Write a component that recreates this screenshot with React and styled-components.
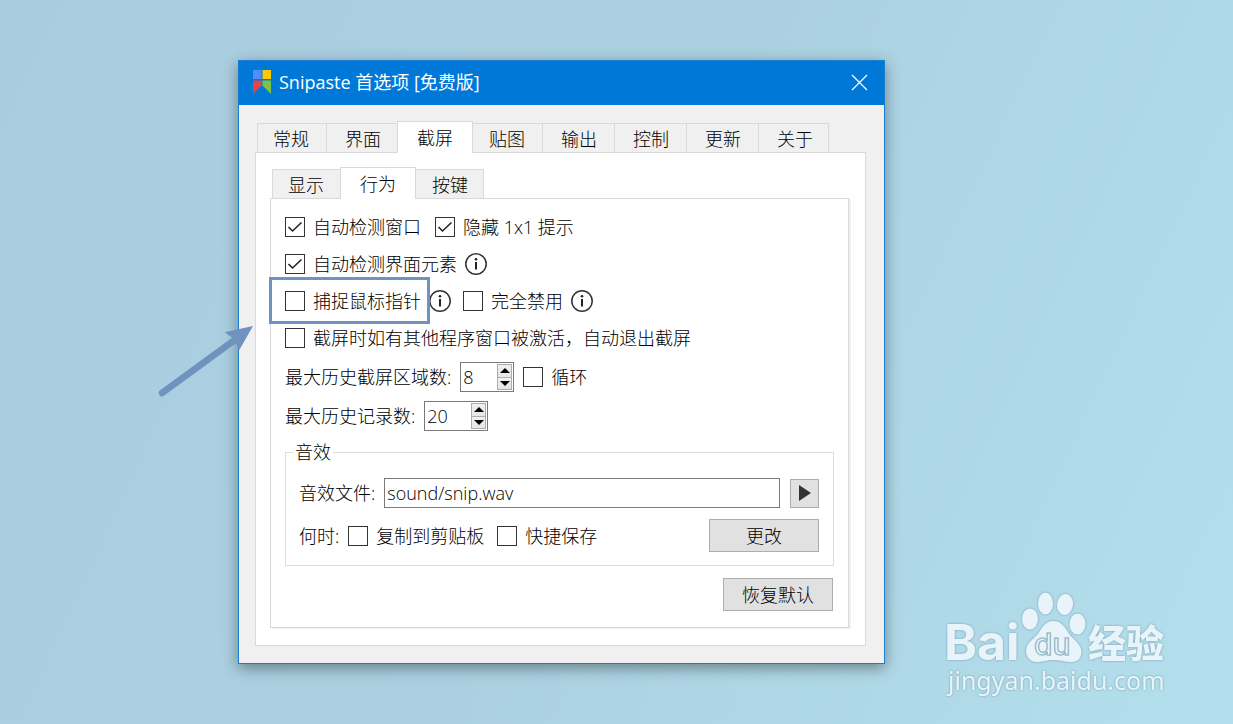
import React, { useState } from "react";
import styled, { createGlobalStyle, css } from "styled-components";

const Global = createGlobalStyle`
  *, *::before, *::after { box-sizing: border-box; }
  body { margin: 0; }
  body, button, input {
    font-family: "Open Sans", "Noto Sans CJK SC", sans-serif;
    font-size: 18px;
    font-weight: 300;
    line-height: 20px;
    color: #000;
  }
`;

const Desktop = styled.main`
  position: relative;
  min-height: 100vh;
  padding: 60px 348px 60px 238px;
  overflow: hidden;
  background: linear-gradient(115deg, #a8cddf 0%, #abd1e1 50%, #b3dfec 100%);
`;

const Dialog = styled.section`
  min-width: 640px;
  border: 1px solid #1a7fd4;
  background: #f0f0f0;
  box-shadow: 0 4px 14px rgba(0, 0, 0, 0.4);
`;

const TitleBar = styled.header`
  display: flex;
  align-items: center;
  height: 44px;
  padding: 0 16px 2px 14px;
  background: #0078d7;
  color: #fff;
`;

const Title = styled.h1`
  flex: 1;
  margin: 0 0 0 8px;
  font-size: 18px;
  font-weight: 400;
  line-height: 24px;
`;

const CloseButton = styled.button`
  display: flex;
  padding: 0;
  border: 0;
  background: none;
`;

const DialogBody = styled.div`
  padding: 16px 18px 17px 16px;
`;

const TabList = styled.div`
  display: flex;
  align-items: flex-end;
  height: 31px;
`;

const Tab = styled.button`
  width: 72px;
  height: 29px;
  padding: 2px 0 0 18px;
  border: 1px solid #d9d9d9;
  border-width: 1px 1px 0 0;
  background: #f0f0f0;
  text-align: left;
  white-space: nowrap;

  &:first-child {
    width: 70px;
    margin-left: 2px;
    padding-left: 15px;
    border-left-width: 1px;
  }
  &:last-child {
    width: 70px;
  }

  ${(p) =>
    p.$active &&
    css`
      position: relative;
      z-index: 1;
      width: 76px;
      height: 32px;
      margin: 0 -2px -1px;
      padding: 0 0 0 19px;
      border-width: 1px 1px 0;
      background: #fff;
    `}
`;

const OuterPanel = styled.div`
  padding: 14px 16px 17px 14px;
  border: 1px solid #d9d9d9;
  background: #fff;
`;

const InnerPanel = styled.form`
  display: flex;
  flex-direction: column;
  padding: 18px 14px 16px;
  border: 1px solid #d9d9d9;
  background: #fff;
  box-shadow: 2px 1px 0 #f0f0f0;
`;

const CheckGroup = styled.div`
  display: flex;
  flex-direction: column;
  gap: 17px;
  margin-bottom: 14px;
`;

const CheckRow = styled.div`
  display: flex;
  align-items: center;
  gap: ${(p) => p.$gap || 8}px;
  height: 20px;
  white-space: nowrap;
`;

const CheckLabel = styled.label`
  position: relative;
  display: flex;
  align-items: center;
  gap: 8px;
  margin-left: ${(p) => (p.$spaced ? 4 : 0)}px;
  white-space: nowrap;

  ${(p) =>
    p.$marked &&
    css`
      &::after {
        content: "";
        position: absolute;
        inset: -14px -9px -13px -16px;
        border: 3px solid #7092be;
        pointer-events: none;
      }
    `}
`;

const CheckBox = styled.input`
  appearance: none;
  flex: none;
  width: 20px;
  height: 20px;
  margin: 0;
  border: 1px solid #333;
  background: #fff;

  &:checked {
    background: #fff
      url("data:image/svg+xml,%3Csvg xmlns='http://www.w3.org/2000/svg' viewBox='0 0 18 18'%3E%3Cpath d='M2.500 9l4 4L15.500 4.500' fill='none' stroke='%23222' stroke-width='1.600'/%3E%3C/svg%3E");
  }
`;

const SpinRow = styled.div`
  display: flex;
  align-items: center;
  gap: 9px;
  height: 30px;
  margin-bottom: 9px;
  white-space: nowrap;
`;

const SpinBox = styled.div`
  display: flex;
  width: ${(p) => p.$width}px;
  height: 30px;
  padding: 1px;
  border: 1px solid #7a7a7a;
  background: #fff;
`;

const SpinInput = styled.input`
  flex: 1;
  min-width: 0;
  padding: 0 0 0 1px;
  border: 0;
  outline: 0;
  appearance: textfield;

  &::-webkit-inner-spin-button {
    appearance: none;
    margin: 0;
  }
`;

const SpinButtons = styled.div`
  display: flex;
  flex-direction: column;
  width: 15px;
`;

const SpinButton = styled.button`
  display: flex;
  flex: 1;
  align-items: center;
  justify-content: center;
  padding: 0;
  border: 1px solid #acacac;
  background: linear-gradient(#f0f0f0, #e5e5e5);

  & + & {
    border-top: 0;
  }
`;

const SoundGroup = styled.fieldset`
  display: flex;
  flex-direction: column;
  gap: 11px;
  min-width: 0;
  margin: 0 0 12px;
  padding: 14px 14px 13px 13px;
  border: 1px solid #dcdcdc;
`;

const Legend = styled.legend`
  height: 24px;
  margin-left: -6px;
  padding: 0 2px;
  line-height: 24px;
`;

const FieldRow = styled.div`
  display: flex;
  align-items: center;
  gap: 9px;
  white-space: nowrap;
`;

const FileInput = styled.input`
  flex: 1;
  min-width: 0;
  height: 30px;
  padding: 0 2px;
  border: 1px solid #7a7a7a;
  outline: 0;
  background: #fff;
`;

const Button = styled.button`
  width: 110px;
  height: 33px;
  padding: 0;
  border: 1px solid #adadad;
  background: #e1e1e1;
`;

const PlayButton = styled(Button)`
  display: flex;
  align-items: center;
  justify-content: center;
  width: 29px;
  height: 29px;
  margin-left: 1px;
`;

const ChangeButton = styled(Button)`
  margin-left: auto;
`;

const ResetButton = styled(Button)`
  align-self: flex-end;
  margin-right: 1px;
`;

const Pointer = styled.svg`
  position: absolute;
  left: 154px;
  top: 320px;
`;

const Watermark = styled.aside`
  position: absolute;
  right: 61px;
  bottom: 22px;
  filter: drop-shadow(0 0 1px rgba(90, 130, 150, 0.7));

  svg {
    display: block;
  }
`;

function Check({ children, defaultChecked, spaced, marked }) {
  return (
    <CheckLabel $spaced={spaced} $marked={marked}>
      <CheckBox type="checkbox" defaultChecked={defaultChecked} />
      {children}
    </CheckLabel>
  );
}

function InfoIcon() {
  return (
    <svg width="22" height="22" viewBox="0 0 22 22" role="img" aria-label="info">
      <circle cx="11" cy="11" r="10.2" fill="none" stroke="#333" strokeWidth="1.5" />
      <path d="M11 9v7.500" stroke="#222" strokeWidth="2" />
      <circle cx="11" cy="6.300" r="1.300" fill="#222" />
    </svg>
  );
}

function Spin({ id, initial, width }) {
  const [value, setValue] = useState(initial);
  return (
    <SpinBox $width={width}>
      <SpinInput
        id={id}
        type="number"
        value={value}
        onChange={(e) => setValue(Number(e.target.value))}
      />
      <SpinButtons>
        <SpinButton type="button" aria-label="+" onClick={() => setValue(value + 1)}>
          <svg width="10" height="5" viewBox="0 0 10 5">
            <path d="M5 0l5 5H0z" />
          </svg>
        </SpinButton>
        <SpinButton type="button" aria-label="-" onClick={() => setValue(value - 1)}>
          <svg width="10" height="5" viewBox="0 0 10 5">
            <path d="M0 0h10L5 5z" />
          </svg>
        </SpinButton>
      </SpinButtons>
    </SpinBox>
  );
}

function Tabs({ items, active }) {
  return (
    <TabList role="tablist">
      {items.map((name) => (
        <Tab key={name} type="button" role="tab" aria-selected={name === active} $active={name === active}>
          {name}
        </Tab>
      ))}
    </TabList>
  );
}

function Logo() {
  return (
    <svg width="18" height="25" viewBox="0 0 18 25" aria-hidden="true">
      <path d="M0 0h8.500v9H0z" fill="#4f8df9" />
      <path d="M9.500 0H18v9H9.500z" fill="#ffc800" />
      <path d="M0 10.500h8.500v5L0 24z" fill="#e64545" />
      <path d="M9.500 10.500H18V24l-8.500-8.500z" fill="#7dc243" />
    </svg>
  );
}

export default function App() {
  return (
    <Desktop>
      <Global />
      <Dialog>
        <TitleBar>
          <Logo />
          <Title>Snipaste 首选项 [免费版]</Title>
          <CloseButton type="button" aria-label="关闭">
            <svg width="17" height="17" viewBox="0 0 17 17">
              <path d="M1 1l15 15M16 1L1 16" stroke="#fff" strokeWidth="1.3" />
            </svg>
          </CloseButton>
        </TitleBar>
        <DialogBody>
          <Tabs items={["常规", "界面", "截屏", "贴图", "输出", "控制", "更新", "关于"]} active="截屏" />
          <OuterPanel>
            <Tabs items={["显示", "行为", "按键"]} active="行为" />
            <InnerPanel>
              <CheckGroup>
                <CheckRow $gap={10}>
                  <Check defaultChecked>自动检测窗口</Check>
                  <Check defaultChecked spaced>隐藏 1x1 提示</Check>
                </CheckRow>
                <CheckRow>
                  <Check defaultChecked>自动检测界面元素</Check>
                  <InfoIcon />
                </CheckRow>
                <CheckRow>
                  <Check marked>捕捉鼠标指针</Check>
                  <InfoIcon />
                  <Check spaced>完全禁用</Check>
                  <InfoIcon />
                </CheckRow>
                <CheckRow>
                  <Check>截屏时如有其他程序窗口被激活，自动退出截屏</Check>
                </CheckRow>
              </CheckGroup>
              <SpinRow>
                <label htmlFor="areas">最大历史截屏区域数:</label>
                <Spin id="areas" initial={8} width={54} />
                <Check>循环</Check>
              </SpinRow>
              <SpinRow>
                <label htmlFor="records">最大历史记录数:</label>
                <Spin id="records" initial={20} width={64} />
              </SpinRow>
              <SoundGroup>
                <Legend>音效</Legend>
                <FieldRow>
                  <label htmlFor="file">音效文件:</label>
                  <FileInput id="file" type="text" defaultValue="sound/snip.wav" />
                  <PlayButton type="button" aria-label="播放">
                    <svg width="12" height="16" viewBox="0 0 12 16">
                      <path d="M0 0l12 8-12 8z" fill="#333" />
                    </svg>
                  </PlayButton>
                </FieldRow>
                <FieldRow>
                  <span>何时:</span>
                  <Check>复制到剪贴板</Check>
                  <Check spaced>快捷保存</Check>
                  <ChangeButton type="button">更改</ChangeButton>
                </FieldRow>
              </SoundGroup>
              <ResetButton type="button">恢复默认</ResetButton>
            </InnerPanel>
          </OuterPanel>
        </DialogBody>
      </Dialog>
      <Pointer width="104" height="80" viewBox="154 320 104 80" aria-hidden="true">
        <path d="M162 393L236 339" stroke="#7092be" strokeWidth="6.500" strokeLinecap="round" />
        <path d="M253 326L224.700 332.300L232 337.500L236 343L239 350.500z" fill="#7092be" />
      </Pointer>
      <Watermark>
        <svg width="228" height="112" viewBox="944 590 228 112" fill="#e8f4fa">
          <text x="944" y="660" fontFamily="Inter, sans-serif" fontSize="50" fontWeight="700">Bai</text>
          <ellipse cx="1030" cy="619" rx="8" ry="10.500" />
          <ellipse cx="1045.500" cy="603.500" rx="7.500" ry="11" />
          <ellipse cx="1065" cy="604.500" rx="8" ry="10.500" transform="rotate(8 1065 604.500)" />
          <ellipse cx="1077.500" cy="624" rx="8" ry="10.500" />
          <path d="M1053.500 621c8 0 11 6 15 12 4 6 13 11 13 19 0 7-5 10-10 10-6 0-11-2-18-2s-11 2-17 2c-6 0-10.500-5-10.500-11 0-8 8-12 12.500-18 4-6 7-12 15-12z" />
          <text x="1034" y="655" fontFamily="Inter, sans-serif" fontSize="30" fontWeight="500" fill="#e8f4fa" stroke="#9dbccb" strokeWidth="1.500">du</text>
          <text x="1088" y="657" fontFamily="Noto Sans CJK SC, sans-serif" fontSize="38" fontWeight="900">经验</text>
          <text x="948" y="690" fontFamily="Noto Sans, sans-serif" fontSize="25" fontWeight="400">jingyan.baidu.com</text>
        </svg>
      </Watermark>
    </Desktop>
  );
}
